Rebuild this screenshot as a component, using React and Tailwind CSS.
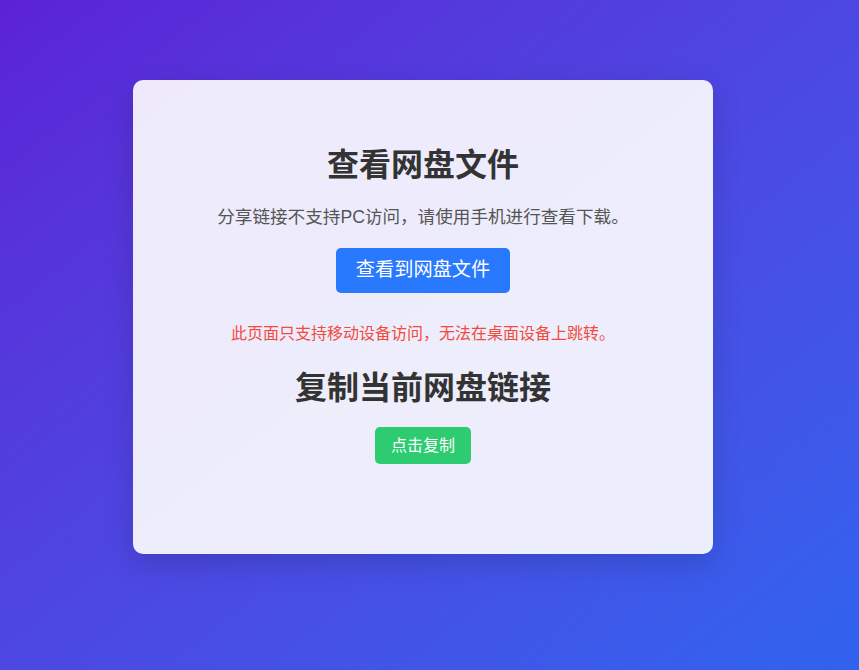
export default function App() {
  const font = { fontFamily: '"Liberation Sans", "Noto Sans CJK SC", sans-serif' };

  return (
    <div
      className="min-h-screen w-full bg-gradient-to-br from-[#5b22d6] to-[#2f63ef] pl-[133px] pt-[80px]"
      style={font}
    >
      <div className="w-[580px] rounded-[10px] bg-white/90 pt-[40px] pb-[90px] text-center shadow-[0_10px_30px_rgba(0,0,0,0.15)]">
        <h1 className="mt-[21px] text-[32px] leading-[48px] font-bold text-[#333]">
          查看网盘文件
        </h1>
        <p className="mt-[15px] text-[17.6px] leading-[26px] text-[#555]">
          分享链接不支持PC访问，请使用手机进行查看下载。
        </p>
        <button className="mt-[18px] h-[45px] rounded-[5px] bg-[#2979ff] px-[20px] text-[19.2px] text-white">
          查看到网盘文件
        </button>
        <p className="mt-[29px] text-[16px] leading-[24px] text-[#f24b3b]">
          此页面只支持移动设备访问，无法在桌面设备上跳转。
        </p>
        <h2 className="mt-[18px] text-[32px] leading-[48px] font-bold text-[#333]">
          复制当前网盘链接
        </h2>
        <button className="mt-[15px] h-[37px] rounded-[5px] bg-[#2ecc71] px-[16px] text-[16px] text-white">
          点击复制
        </button>
      </div>
    </div>
  );
}
